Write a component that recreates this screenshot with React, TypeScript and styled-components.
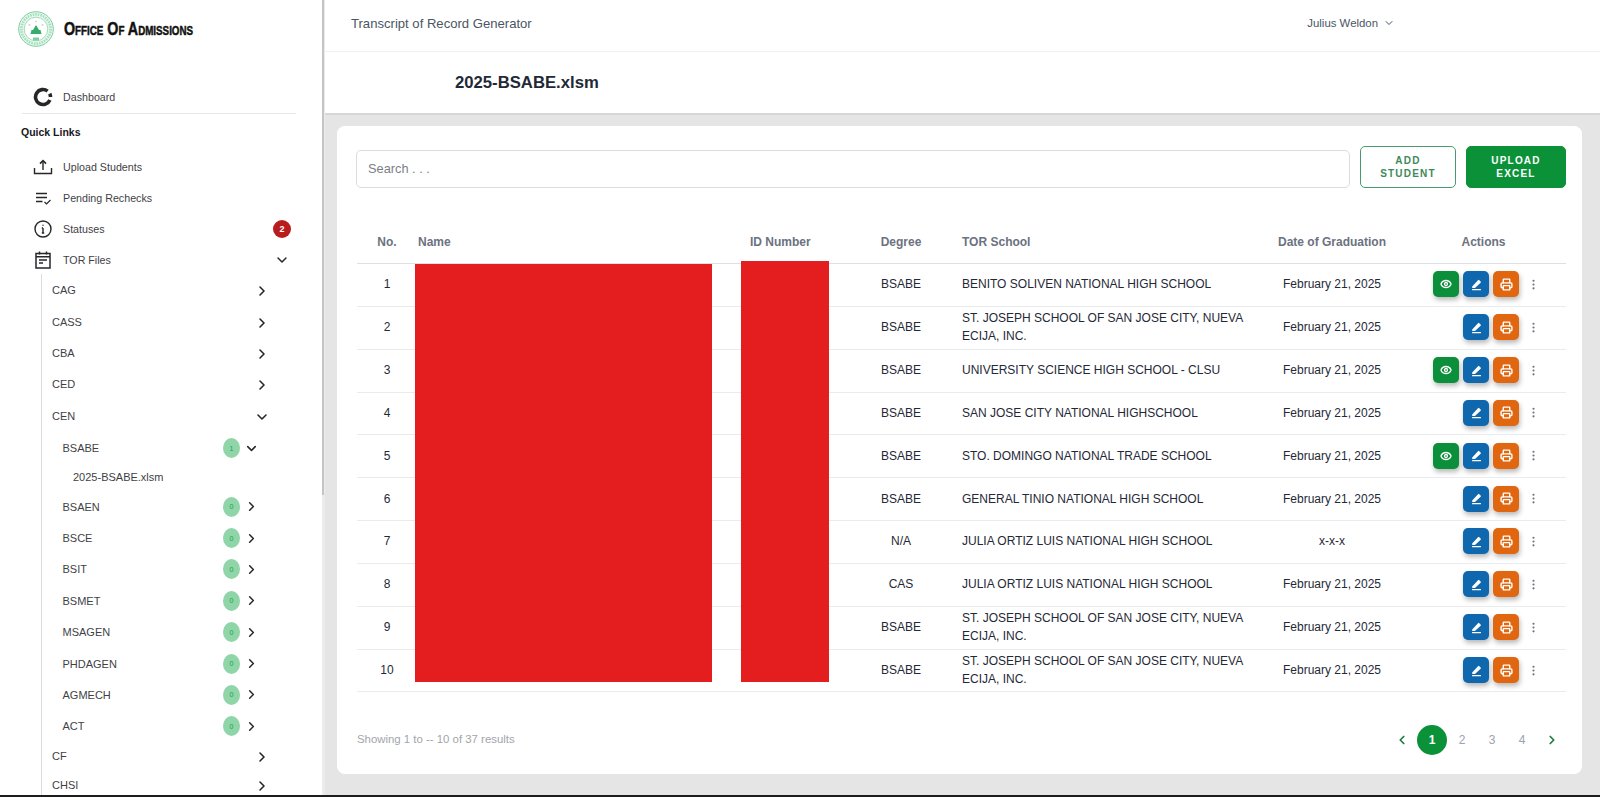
import React from "react";
import styled, { createGlobalStyle } from "styled-components";
import { ChevronRight, ChevronDown, ChevronLeft, EllipsisVertical, Printer, Eye } from "lucide-react";

const Global = createGlobalStyle`
  html, body { margin: 0; padding: 0; background: #fff; }
  body { font-family: "Liberation Sans", Arial, sans-serif; color: #1f2937; overflow: hidden; }
  * { box-sizing: border-box; }
`;

const Page = styled.div`
  width: 1600px; height: 797px; display: flex; flex-direction: column; overflow: hidden;
`;
const Shell = styled.div`
  flex: 1; min-height: 0; display: flex;
`;
const BottomEdge = styled.div`
  height: 2px; background: #1c1c1c;
`;
const Sidebar = styled.aside`
  width: 322px; flex: none; background: #fff; overflow: hidden; display: flex; flex-direction: column;
`;
const ScrollTrack = styled.div`
  width: 3px; flex: none; background: #ececec;
`;
const ScrollThumb = styled.div`
  height: 495px; width: 2px; background: #c4c4c4;
`;
const Brand = styled.div`
  display: flex; align-items: center; gap: 10px; padding: 11px 0 0 18px; height: 47px; flex: none;
`;
const BrandTitle = styled.div`
  font-weight: 700; font-size: 19px; font-variant: small-caps; color: #111; white-space: nowrap;
  -webkit-text-stroke: 0.5px #111; transform: scaleX(0.752); transform-origin: left center;
`;
const NavItem = styled.div<{ $top?: number }>`
  display: flex; align-items: center; height: 31.1px; padding-left: 33px; margin-top: ${p => p.$top ?? 0}px; flex: none;
  font-size: 10.7px; color: #3f3f46; position: relative;
`;
const NavIcon = styled.span`
  width: 20px; height: 20px; margin-right: 10px; display: flex; align-items: center; justify-content: center; color: #27272a;
`;
const Divider = styled.div`
  height: 1px; background: #e8e8e8; margin: 1px 26px 0 22px; flex: none;
`;
const SectionTitle = styled.div`
  font-size: 10.5px; font-weight: 700; color: #18181b; margin: 12px 0 12px 21px; line-height: 13px; flex: none;
`;
const Alert = styled.span`
  margin-left: auto; margin-right: 31px; width: 18px; height: 18px; border-radius: 50%;
  background: #b91c1c; color: #fff; font-size: 9px; font-weight: 700; display: flex; align-items: center; justify-content: center;
`;
const Trailing = styled.span<{ $right: number }>`
  margin-left: auto; margin-right: ${p => p.$right}px; display: flex; color: #27272a;
`;
const Tree = styled.div`
  margin-left: 41px; border-left: 1px solid #dcdcdc; padding-left: 10px; margin-top: -1px; flex: 1;
`;
const TreeRow = styled.div<{ $level: number; $h?: number }>`
  display: flex; align-items: center; height: ${p => p.$h ?? 31.4}px; padding-left: ${p => (p.$level - 1) * 10.5}px;
  font-size: 11px; color: #3f3f46;
`;
const FileRow = styled(TreeRow)`
  margin-top: -1px; padding-bottom: 1px;
`;
const TreeEnd = styled.div`
  margin-left: auto; display: flex; align-items: center; margin-right: 52px; padding-top: 2px; color: #27272a;
`;
const SubEnd = styled.div`
  margin-left: auto; display: flex; align-items: center; gap: 4px; margin-right: 63px; color: #27272a;
`;
const Count = styled.span`
  width: 17px; height: 20px; border-radius: 50%; background: #8fd5a8; color: #16a34a; font-size: 7px;
  display: flex; align-items: center; justify-content: center;
`;
const Main = styled.main`
  flex: 1; min-width: 0; background: #e5e5e5; display: flex; flex-direction: column;
`;
const TopBar = styled.header`
  height: 51px; background: #fff; padding: 0 0 5px 26px; display: flex; align-items: center;
  font-size: 13.1px; color: #4b5563;
`;
const User = styled.div`
  margin-left: auto; margin-right: 205px; display: flex; align-items: center; gap: 5px; font-size: 11.4px; color: #4b5563;
`;
const SubBar = styled.div`
  height: 64px; background: #fff; border-top: 1px solid #f1f1f1; border-bottom: 2px solid #d6d6d6;
  padding-left: 130px; display: flex; align-items: center; font-size: 16.7px; font-weight: 700; color: #1f2937;
`;
const Card = styled.section`
  margin: 11px 18px 0 12px; background: #fff; border-radius: 8px; height: 648px; padding: 20px 16px 0 20px; display: flex; flex-direction: column;
`;
const Toolbar = styled.div`
  display: flex; align-items: center; height: 42px; gap: 10px;
`;
const Search = styled.input`
  flex: 1; height: 38px; border: 1px solid #d9dce1; border-radius: 5px; padding: 0 11px; font: 12.8px "Liberation Sans", sans-serif;
  color: #6b7280; margin: 3px 0 0 -1px;
  &::placeholder { color: #7b8088; opacity: 1; }
`;
const ActionButton = styled.button<{ $solid?: boolean }>`
  width: ${p => (p.$solid ? 100 : 96)}px; height: 42px; border-radius: 5px; font: 700 10px/13px "Liberation Sans", sans-serif;
  letter-spacing: 1.2px; text-transform: uppercase; padding: 0 14px;
  border: 1px solid ${p => (p.$solid ? "#0b9238" : "#4a9a70")}; background: ${p => (p.$solid ? "#0b9238" : "#fff")}; color: ${p => (p.$solid ? "#fff" : "#3e8a5a")};
`;
const TableWrap = styled.div`
  margin-top: 32px; position: relative;
`;
const columns = "60px 315px 128px 82px 318px 144px 163px";
const HeadRow = styled.div`
  display: grid; grid-template-columns: ${columns}; height: 44px; align-items: center;
  border-bottom: 1px solid #dcdfe3; font-size: 12px; font-weight: 700; color: #6b7280;
`;
const Row = styled.div`
  display: grid; grid-template-columns: ${columns}; height: 42.85px; align-items: center; padding-bottom: 1px;
  border-bottom: 1px solid #e9ebee; font-size: 12px; color: #1f2937;
`;
const Cell = styled.div<{ $align?: string; $pad?: string }>`
  text-align: ${p => p.$align ?? "left"}; padding: ${p => p.$pad ?? "0"}; line-height: 18px;
`;
const Actions = styled.div`
  display: flex; align-items: center; gap: 4px; padding-left: 29px;
`;
const IconBtn = styled.span<{ $bg: string; $hidden?: boolean }>`
  width: 26px; height: 26px; border-radius: 5px; background: ${p => p.$bg}; color: #fff; display: flex;
  align-items: center; justify-content: center; box-shadow: 1px 3px 5px rgba(0,0,0,.28);
  visibility: ${p => (p.$hidden ? "hidden" : "visible")};
`;
const Dots = styled.span`
  display: flex; margin-left: 4px; color: #6b7280;
`;
const Redaction = styled.div<{ $l: number; $t: number; $w: number; $h: number }>`
  position: absolute; left: ${p => p.$l}px; top: ${p => p.$t}px; width: ${p => p.$w}px; height: ${p => p.$h}px; background: #e41e1e;
`;
const Footer = styled.div`
  display: flex; align-items: center; justify-content: space-between; margin-top: 31px; height: 32px;
  font-size: 11.4px; color: #a1a5ab;
`;
const Pager = styled.div`
  display: flex; align-items: center; margin: 2px -1px 0 0;
`;
const PageNum = styled.span<{ $active?: boolean }>`
  width: 30px; height: 30px; border-radius: 50%; display: flex; align-items: center; justify-content: center; font-size: 12px;
  background: ${p => (p.$active ? "#0b9238" : "transparent")}; color: ${p => (p.$active ? "#fff" : "#9ca3af")};
  font-weight: ${p => (p.$active ? 700 : 400)};
`;
const PageArrow = styled.span`
  width: 30px; display: flex; justify-content: center; color: #1f7a44;
`;

const Seal = () => (
  <svg width="36" height="36" viewBox="0 0 36 36">
    <circle cx="18" cy="18" r="17.3" fill="#e9f7ee" stroke="#7ccf9f" strokeWidth="1" />
    <circle cx="18" cy="18" r="14.6" fill="none" stroke="#a5dfbe" strokeWidth="2.6" strokeDasharray="1.6 1" />
    <circle cx="18" cy="18" r="11.8" fill="#fff" stroke="#7ccf9f" strokeWidth=".7" />
    <path d="M18 14l3 5h1.5l1 4H12.500l1-4H15z" fill="#35ad6b" />
    <circle cx="11.500" cy="14" r="1" fill="#b4e4c9" />
    <circle cx="24.500" cy="14" r="1" fill="#b4e4c9" />
    <circle cx="18" cy="10.500" r="1" fill="#b4e4c9" />
    <rect x="15" y="26.500" width="6" height="3" fill="#7ccf9f" />
  </svg>
);
const DashIcon = () => (
  <svg width="20" height="20" viewBox="0 0 20 20" fill="none" stroke="#27272a" strokeWidth="3.6">
    <path d="M14.600 4.100A7.500 7.500 0 1 0 16.900 13" />
    <path d="M16.700 6.600A7.500 7.500 0 0 1 17.500 10" />
  </svg>
);
const UploadIcon = () => (
  <svg width="20" height="20" viewBox="0 0 20 20" fill="none" stroke="#27272a" strokeWidth="1.4">
    <path d="M1.500 11v5.500h17V11" />
    <path d="M10 13V4" />
    <path d="M7 6.600 10 3.600l3 3" strokeWidth="1.6" />
  </svg>
);
const PendingIcon = () => (
  <svg width="20" height="20" viewBox="0 0 20 20" fill="none" stroke="#27272a" strokeWidth="1.4">
    <path d="M3 5.500h11M3 9.500h11M3 13.500h6.500" />
    <path d="m11.500 14 2 2 4-4" strokeWidth="1.2" />
  </svg>
);
const InfoIcon = () => (
  <svg width="20" height="20" viewBox="0 0 20 20" fill="none" stroke="#27272a" strokeWidth="1.4">
    <circle cx="10" cy="10" r="8" />
    <path d="M10 9v5M8.800 14h2.400M8.800 9H10" />
    <circle cx="10" cy="6.300" r=".7" fill="#27272a" stroke="none" />
  </svg>
);
const CalendarIcon = () => (
  <svg width="20" height="20" viewBox="0 0 20 20" fill="none" stroke="#27272a" strokeWidth="1.5">
    <rect x="3" y="3.500" width="14" height="14.500" />
    <path d="M3 6.800h14M6.500 1.500v3M13.500 1.500v3M6 10h8M6 13h4" />
  </svg>
);
const PencilIcon = () => (
  <svg width="13" height="13" viewBox="0 0 13 13" fill="#fff">
    <path d="M2.200 8.400 8 2.200a.9.9 0 0 1 1.300 0l1.300 1.300a.9.900 0 0 1 0 1.300L5 10.100H2.200z" />
    <rect x="2" y="11" width="9" height="1.200" rx=".5" />
  </svg>
);

const colleges1 = ["CAG", "CASS", "CBA", "CED"];
const programs = ["BSAEN", "BSCE", "BSIT", "BSMET", "MSAGEN", "PHDAGEN", "AGMECH", "ACT"];

const J = "ST. JOSEPH SCHOOL OF SAN JOSE CITY, NUEVA ECIJA, INC.";
const D = "February 21, 2025";
const rows = [
  ["1", "BSABE", "BENITO SOLIVEN NATIONAL HIGH SCHOOL", D, true],
  ["2", "BSABE", J, D, false],
  ["3", "BSABE", "UNIVERSITY SCIENCE HIGH SCHOOL - CLSU", D, true],
  ["4", "BSABE", "SAN JOSE CITY NATIONAL HIGHSCHOOL", D, false],
  ["5", "BSABE", "STO. DOMINGO NATIONAL TRADE SCHOOL", D, true],
  ["6", "BSABE", "GENERAL TINIO NATIONAL HIGH SCHOOL", D, false],
  ["7", "N/A", "JULIA ORTIZ LUIS NATIONAL HIGH SCHOOL", "x-x-x", false],
  ["8", "CAS", "JULIA ORTIZ LUIS NATIONAL HIGH SCHOOL", D, false],
  ["9", "BSABE", J, D, false],
  ["10", "BSABE", J, D, false],
] as const;

export default function App() {
  return (
    <Page>
      <Global />
      <Shell>
        <Sidebar>
          <Brand>
            <Seal />
            <BrandTitle>Office Of Admissions</BrandTitle>
          </Brand>
          <NavItem $top={34}><NavIcon><DashIcon /></NavIcon>Dashboard</NavItem>
          <Divider />
          <SectionTitle>Quick Links</SectionTitle>
          <NavItem><NavIcon><UploadIcon /></NavIcon>Upload Students</NavItem>
          <NavItem><NavIcon><PendingIcon /></NavIcon>Pending Rechecks</NavItem>
          <NavItem><NavIcon><InfoIcon /></NavIcon>Statuses<Alert>2</Alert></NavItem>
          <NavItem>
            <NavIcon><CalendarIcon /></NavIcon>TOR Files
            <Trailing $right={32}><ChevronDown size={16} strokeWidth={2.2} /></Trailing>
          </NavItem>
          <Tree>
            {colleges1.map(c => (
              <TreeRow $level={1} key={c}>{c}<TreeEnd><ChevronRight size={16} strokeWidth={2.4} /></TreeEnd></TreeRow>
            ))}
            <TreeRow $level={1}>CEN<TreeEnd><ChevronDown size={16} strokeWidth={2.4} /></TreeEnd></TreeRow>
            <TreeRow $level={2} $h={34}>BSABE<SubEnd><Count>1</Count><ChevronDown size={15} strokeWidth={2.4} /></SubEnd></TreeRow>
            <FileRow $level={3} $h={26.5}>2025-BSABE.xlsm</FileRow>
            {programs.map(p => (
              <TreeRow $level={2} key={p}>{p}<SubEnd><Count>0</Count><ChevronRight size={15} strokeWidth={2.4} /></SubEnd></TreeRow>
            ))}
            <TreeRow $level={1} $h={27}>CF<TreeEnd><ChevronRight size={16} strokeWidth={2.4} /></TreeEnd></TreeRow>
            <TreeRow $level={1}>CHSI<TreeEnd><ChevronRight size={16} strokeWidth={2.4} /></TreeEnd></TreeRow>
          </Tree>
        </Sidebar>
        <ScrollTrack><ScrollThumb /></ScrollTrack>
        <Main>
          <TopBar>
            Transcript of Record Generator
            <User>Julius Weldon <ChevronDown size={12} /></User>
          </TopBar>
          <SubBar>2025-BSABE.xlsm</SubBar>
          <Card>
            <Toolbar>
              <Search placeholder="Search . . ." />
              <ActionButton>Add Student</ActionButton>
              <ActionButton $solid>Upload Excel</ActionButton>
            </Toolbar>
            <TableWrap>
              <HeadRow>
                <Cell $align="center">No.</Cell>
                <Cell $pad="0 0 0 1px">Name</Cell>
                <Cell $pad="0 0 0 18px">ID Number</Cell>
                <Cell $align="center">Degree</Cell>
                <Cell $pad="0 13px 0 20px">TOR School</Cell>
                <Cell $align="center">Date of Graduation</Cell>
                <Cell $align="center" $pad="0 4px 0 0">Actions</Cell>
              </HeadRow>
              {rows.map(r => (
                <Row key={r[0]}>
                  <Cell $align="center">{r[0]}</Cell>
                  <Cell />
                  <Cell />
                  <Cell $align="center">{r[1]}</Cell>
                  <Cell $pad="0 13px 0 20px">{r[2]}</Cell>
                  <Cell $align="center">{r[3]}</Cell>
                  <Actions>
                    <IconBtn $bg="#0b8f3a" $hidden={!r[4]}><Eye size={12} strokeWidth={2.6} /></IconBtn>
                    <IconBtn $bg="#0f67ad"><PencilIcon /></IconBtn>
                    <IconBtn $bg="#e0660f"><Printer size={13} strokeWidth={2.6} /></IconBtn>
                    <Dots><EllipsisVertical size={13} /></Dots>
                  </Actions>
                </Row>
              ))}
              <Redaction $l={58} $t={44} $w={297} $h={418} />
              <Redaction $l={384} $t={41} $w={88} $h={421} />
            </TableWrap>
            <Footer>
              <span>Showing 1 to -- 10 of 37 results</span>
              <Pager>
                <PageArrow><ChevronLeft size={14} strokeWidth={3} /></PageArrow>
                <PageNum $active>1</PageNum>
                <PageNum>2</PageNum>
                <PageNum>3</PageNum>
                <PageNum>4</PageNum>
                <PageArrow><ChevronRight size={14} strokeWidth={3} /></PageArrow>
              </Pager>
            </Footer>
          </Card>
        </Main>
      </Shell>
      <BottomEdge />
    </Page>
  );
}
